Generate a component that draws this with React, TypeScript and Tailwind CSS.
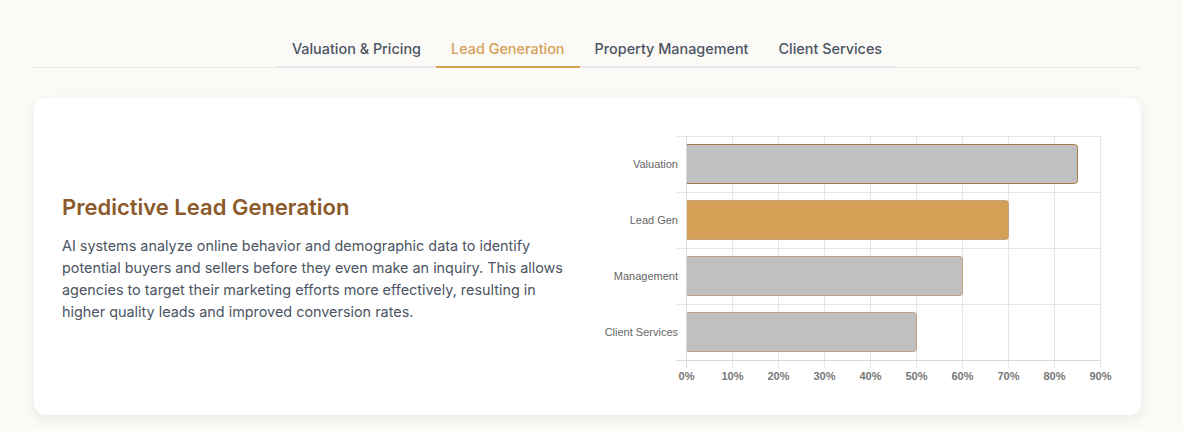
import React from 'react'

const tabs = ['Valuation & Pricing', 'Lead Generation', 'Property Management', 'Client Services']

const bars = [
  { label: 'Valuation', value: 85, active: false },
  { label: 'Lead Gen', value: 70, active: true },
  { label: 'Management', value: 60, active: false },
  { label: 'Client Services', value: 50, active: false },
]

// chart geometry (px inside the svg)
const W = 505
const H = 261
const X0 = 78.5
const XMAX = 492.5
const Y0 = 10
const ROW = 56
const BAR_H = 40

function xFor(v: number) {
  return X0 + ((XMAX - X0) * v) / 90
}

function BarChart() {
  const ticks = [0, 10, 20, 30, 40, 50, 60, 70, 80, 90]
  return (
    <svg width={W} height={H} viewBox={`0 0 ${W} ${H}`} className="block overflow-visible">
      {/* vertical grid */}
      {ticks.map((t) => (
        <line key={t} x1={xFor(t)} x2={xFor(t)} y1={Y0} y2={Y0 + ROW * 4 + 8} stroke="#e5e5e5" strokeWidth={1} />
      ))}
      {/* horizontal grid */}
      {[0, 1, 2, 3, 4].map((i) => (
        <line key={i} x1={X0 - 10} x2={XMAX} y1={Y0 + ROW * i + 0.5} y2={Y0 + ROW * i + 0.5} stroke="#e5e5e5" strokeWidth={1} />
      ))}
      <line x1={X0} x2={X0} y1={Y0} y2={Y0 + ROW * 4 + 8} stroke="#d9d9d9" strokeWidth={1} />
      <line x1={X0 - 10} x2={XMAX} y1={Y0 + ROW * 4 + 0.5} y2={Y0 + ROW * 4 + 0.5} stroke="#d9d9d9" strokeWidth={1} />

      {bars.map((b, i) => {
        const top = Y0 + ROW * i + (ROW - BAR_H) / 2
        const right = xFor(b.value)
        const x = X0 + 0.5
        const r = 3
        const fill = b.active ? '#d4a055' : '#c0c0c0'
        const outline = `M ${x} ${top + 0.5} H ${right - r} Q ${right} ${top + 0.5} ${right} ${top + 0.5 + r} V ${top + BAR_H - 0.5 - r} Q ${right} ${top + BAR_H - 0.5} ${right - r} ${top + BAR_H - 0.5} H ${x}`
        return (
          <g key={b.label}>
            <path d={outline + ' Z'} fill={fill} />
            <path d={outline} fill="none" stroke={i === 0 ? '#a57a4c' : '#c4a07c'} strokeWidth={1} />
            <text
              x={X0 - 8.5}
              y={top + BAR_H / 2 + 4}
              textAnchor="end"
              fontSize={11}
              fill="#666"
              fontFamily="'Liberation Sans', Arial, sans-serif"
            >
              {b.label}
            </text>
          </g>
        )
      })}

      {ticks.map((t) => (
        <text
          key={t}
          x={xFor(t)}
          y={Y0 + ROW * 4 + 20}
          textAnchor="middle"
          fontSize={11}
          fontWeight="bold"
          fill="#777"
          fontFamily="'Liberation Sans', Arial, sans-serif"
        >
          {t}%
        </text>
      ))}
    </svg>
  )
}

export default function App() {
  return (
    <div className="min-h-[431px] bg-[#fbfaf6] pl-[33px] pr-[42px] pt-[29px] font-['Inter',sans-serif]">
      <div className="flex justify-center border-b border-[#ebe9e6]">
        <div className="flex">
          {tabs.map((t) => {
            const active = t === 'Lead Generation'
            return (
              <button
                key={t}
                className={
                  active
                    ? 'px-[15px] pt-[10px] pb-[7px] text-[14.4px] leading-5 font-medium text-[#d4a055] border-b-2 border-[#d4a055] -mb-px'
                    : 'px-[15px] pt-[10px] pb-[7px] text-[14.4px] leading-5 font-medium text-[#4b5563] border-b-2 border-[#e5e7eb] -mb-px'
                }
              >
                {t}
              </button>
            )
          })}
        </div>
      </div>

      <div className="mt-[30px] ml-px rounded-xl bg-white p-7 shadow-[0_4px_14px_rgba(0,0,0,0.07)]">
        <div className="grid grid-cols-2 items-center gap-10">
          <div>
            <h2 className="mb-3 text-[22px] leading-8 font-semibold text-[#8b5a2b]">Predictive Lead Generation</h2>
            <p className="text-[14.4px] leading-[22px] text-[#4b5563]">
              AI systems analyze online behavior and demographic data to identify potential buyers and sellers before they
              even make an inquiry. This allows agencies to target their marketing efforts more effectively, resulting in
              higher quality leads and improved conversion rates.
            </p>
          </div>
          <div>
            <BarChart />
          </div>
        </div>
      </div>
    </div>
  )
}
